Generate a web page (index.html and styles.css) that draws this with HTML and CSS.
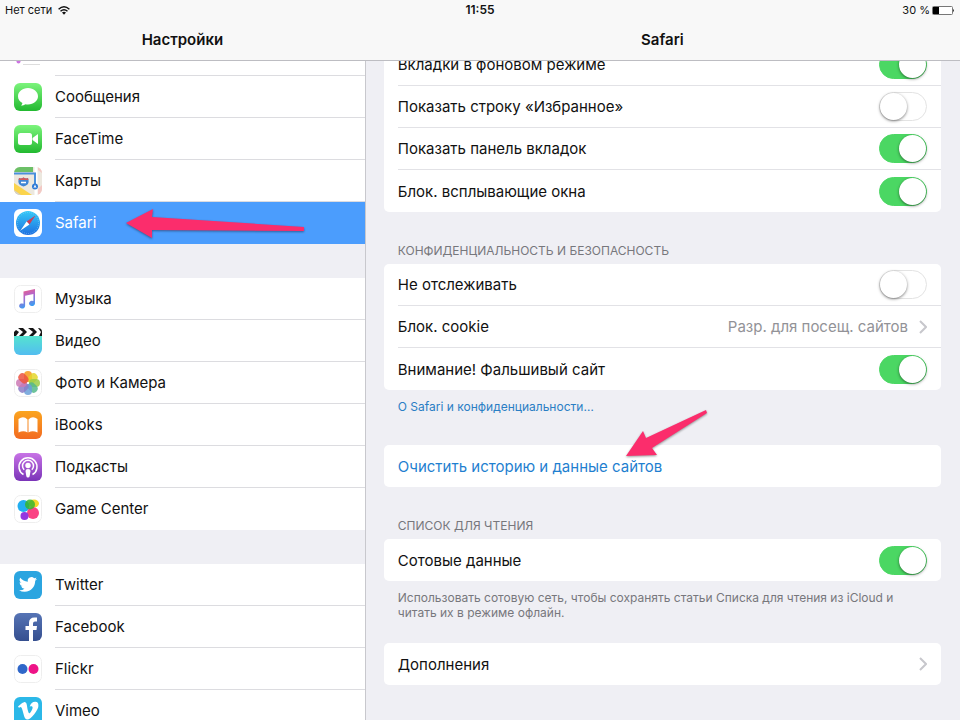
FILE: index.html
```html
<!DOCTYPE html>
<html lang="ru">
<head>
    <meta charset="UTF-8">
    <meta name="viewport" content="width=device-width, initial-scale=1.0">
    <title>Настройки</title>
    <link rel="stylesheet" href="styles.css">
</head>
<body>
    <header class="topbar">
        <div class="status">
            <span class="status-left">Нет сети
                <svg width="12" height="9" viewBox="0 0 12 9" fill="none" stroke="#111" stroke-width="1.5">
                    <path d="M0.6 3.2Q6 -1.6 11.4 3.2"/>
                    <path d="M2.5 5.2Q6 2.2 9.5 5.2"/>
                    <path d="M4 6.6Q6 5 8 6.6L6 8.8Z" fill="#111" stroke="none"/>
                </svg>
            </span>
            <span class="status-time">11:55</span>
            <span class="status-right">30 %
                <svg width="23" height="9" viewBox="0 0 23 9">
                    <rect x="0.5" y="0.5" width="20" height="8" rx="1" fill="#fff" stroke="#777"/>
                    <rect x="1" y="1" width="6" height="7" fill="#000"/>
                    <path d="M21 3Q23 4.5 21 6Z" fill="#333"/>
                </svg>
            </span>
        </div>
        <div class="titles">
            <h1 class="title">Настройки</h1>
            <h2 class="title">Safari</h2>
        </div>
    </header>

    <div class="panels">
        <nav class="sidebar">
            <div class="menu">
                <a class="menu-item" href="#" aria-label="Напоминания">
                    <svg class="icon" viewBox="0 0 28 28">
                        <rect width="28" height="28" rx="6" fill="#fff"/>
                        <g stroke="#ddd"><path d="M9 5.5H26M9 11.5H26M9 17.5H26M9 23.5H26"/></g>
                        <circle cx="4.5" cy="3" r="2" fill="#f90"/>
                        <circle cx="4.5" cy="9" r="2" fill="#1badf8"/>
                        <circle cx="4.5" cy="15" r="2" fill="#63da38"/>
                        <circle cx="4.5" cy="20.5" r="2" fill="#cc73e1"/>
                    </svg>
                    <span></span>
                </a>
                <a class="menu-item" href="#">
                    <svg class="icon" viewBox="0 0 28 28">
                        <defs>
                            <linearGradient id="green" x2="0" y2="1"><stop stop-color="#7cf47c"/><stop offset="1" stop-color="#22b930"/></linearGradient>
                        </defs>
                        <rect width="28" height="28" rx="6" fill="url(#green)"/>
                        <path d="M14 5C8.3 5 4 8.700 4 13.300c0 3 1.700 5.400 4.400 6.800-.2 1.200-.7 1.800-1.400 2.500 1.900 0 3.200-.5 4.500-1.400.8.2 1.600.3 2.500.3 5.700 0 10-3.600 10-8.200S19.700 5 14 5z" fill="#fff"/>
                    </svg>
                    <span>Сообщения</span>
                </a>
                <a class="menu-item" href="#">
                    <svg class="icon" viewBox="0 0 28 28">
                        <rect width="28" height="28" rx="6" fill="url(#green)"/>
                        <rect x="4" y="8" width="14" height="12" rx="2.5" fill="#fff"/>
                        <path d="M18.5 13L24 9v10l-5.500-4z" fill="#fff"/>
                    </svg>
                    <span>FaceTime</span>
                </a>
                <a class="menu-item" href="#">
                    <svg class="icon" viewBox="0 0 28 28">
                        <clipPath id="tile"><rect width="28" height="28" rx="6"/></clipPath>
                        <g clip-path="url(#tile)">
                            <rect width="28" height="28" fill="#ece8df"/>
                            <path d="M0 0H19V5H0z" fill="#6cc067"/>
                            <path d="M24 0h4v6l-4-3zM24 22l4-4v10h-4z" fill="#f3c9c4"/>
                            <path d="M0 16L18 28H5L0 25z" fill="#fbd44c"/>
                            <path d="M0 23l7 5H0z" fill="#d4d1cb"/>
                            <path d="M22 0V28" stroke="#fff" stroke-width="3"/>
                            <path d="M0 6.5H21V19" fill="none" stroke="#4a90dc" stroke-width="2"/>
                            <circle cx="21" cy="19.5" r="3" fill="#2f7bd6"/>
                            <path d="M21 17.5l1.500 3.500-1.500-.7-1.500.7z" fill="#fff"/>
                            <path d="M5 11q2 1 4.500-.5Q12 12 14 11q1.500 4-.5 6.500-2 1.500-4 2-2-.5-4-2Q3.500 15 5 11z" fill="#4186d5"/>
                            <path d="M5 11q2 1 4.500-.5Q12 12 14 11l.4 2H4.600z" fill="#d85a5a"/>
                            <path d="M7 15.500h5" stroke="#fff" stroke-width="1.500"/>
                        </g>
                    </svg>
                    <span>Карты</span>
                </a>
                <a class="menu-item selected" href="#" aria-current="page">
                    <svg class="icon" viewBox="0 0 28 28">
                        <defs>
                            <linearGradient id="compass" x2="0" y2="1"><stop stop-color="#35c9f8"/><stop offset="1" stop-color="#1e6fe0"/></linearGradient>
                        </defs>
                        <rect width="28" height="28" rx="6" fill="#fff"/>
                        <circle cx="14" cy="14" r="12" fill="url(#compass)"/>
                        <circle cx="14" cy="14" r="10.5" fill="none" stroke="#8fd3fb" stroke-width="1" stroke-dasharray="0.5 1.7"/>
                        <path d="M21.500 6.500L15.400 15.400 12.600 12.600z" fill="#c8405a"/>
                        <path d="M6.500 21.500L15.400 15.400 12.600 12.600z" fill="#fff"/>
                    </svg>
                    <span>Safari</span>
                    <svg class="arrow arrow-left" viewBox="0 0 182 34">
                        <path d="M2 17L29 3 28 11 180 21 180 25 28 24 28 32z" fill="#fb2d6c"/>
                    </svg>
                </a>
            </div>

            <div class="menu">
                <a class="menu-item" href="#">
                    <svg class="icon" viewBox="0 0 28 28">
                        <defs>
                            <linearGradient id="note" x1="0" y1="0" x2="0.3" y2="1"><stop stop-color="#fb5c74"/><stop offset="0.45" stop-color="#b765c8"/><stop offset="1" stop-color="#3b9df3"/></linearGradient>
                        </defs>
                        <rect x="0.5" y="0.5" width="27" height="27" rx="6" fill="#fff" stroke="#eee"/>
                        <path d="M9.500 6.500L21 4v14.500a3 2.600 0 1 1-1.600-2.400V9L11.100 10.800V21a3 2.600 0 1 1-1.600-2.300z" fill="url(#note)"/>
                    </svg>
                    <span>Музыка</span>
                </a>
                <a class="menu-item" href="#">
                    <svg class="icon" viewBox="0 0 28 28">
                        <defs>
                            <linearGradient id="video" x2="0" y2="1"><stop stop-color="#55e3d0"/><stop offset="1" stop-color="#52bdf0"/></linearGradient>
                        </defs>
                        <path d="M0 9H28V22a6 6 0 0 1-6 6H6a6 6 0 0 1-6-6z" fill="url(#video)"/>
                        <path d="M0 5q0-4 4-4h20q4 0 4 4v4H0z" fill="#fff"/>
                        <path d="M0 9V5l2-2 3 2-3 4zM4 1h5l4 4-4 4H5l4-4zM14 1h5l4 4-4 4h-4l4-4zM24 1q4 0 4 4v4h-3l2-4z" fill="#151515"/>
                    </svg>
                    <span>Видео</span>
                </a>
                <a class="menu-item" href="#">
                    <svg class="icon" viewBox="0 0 28 28">
                        <rect x="0.5" y="0.5" width="27" height="27" rx="6" fill="#fff" stroke="#eee"/>
                        <g class="petals">
                            <rect x="10" y="2" width="8" height="11" rx="4" fill="#f79a1d"/>
                            <rect x="10" y="2" width="8" height="11" rx="4" fill="#e4d62b" transform="rotate(45 14 14)"/>
                            <rect x="10" y="2" width="8" height="11" rx="4" fill="#9ccb45" transform="rotate(90 14 14)"/>
                            <rect x="10" y="2" width="8" height="11" rx="4" fill="#55b98b" transform="rotate(135 14 14)"/>
                            <rect x="10" y="2" width="8" height="11" rx="4" fill="#6a9fd8" transform="rotate(180 14 14)"/>
                            <rect x="10" y="2" width="8" height="11" rx="4" fill="#8b7cc6" transform="rotate(225 14 14)"/>
                            <rect x="10" y="2" width="8" height="11" rx="4" fill="#cc79b5" transform="rotate(270 14 14)"/>
                            <rect x="10" y="2" width="8" height="11" rx="4" fill="#ec5440" transform="rotate(315 14 14)"/>
                        </g>
                    </svg>
                    <span>Фото и Камера</span>
                </a>
                <a class="menu-item" href="#">
                    <svg class="icon" viewBox="0 0 28 28">
                        <defs>
                            <linearGradient id="books" x2="0" y2="1"><stop stop-color="#fba51f"/><stop offset="1" stop-color="#f26a21"/></linearGradient>
                        </defs>
                        <rect width="28" height="28" rx="6" fill="url(#books)"/>
                        <path d="M13.500 8.500Q9.500 4.500 4.500 8v13.500q5-2.500 9 0zM14.500 8.500q4-4 9-.5v13.500q-5-2.500-9 0z" fill="#fff"/>
                    </svg>
                    <span>iBooks</span>
                </a>
                <a class="menu-item" href="#">
                    <svg class="icon" viewBox="0 0 28 28">
                        <defs>
                            <linearGradient id="podcast" x2="0" y2="1"><stop stop-color="#c873e6"/><stop offset="1" stop-color="#7a34b8"/></linearGradient>
                        </defs>
                        <rect width="28" height="28" rx="6" fill="url(#podcast)"/>
                        <path d="M9.500 21.500a9 9 0 1 1 9 0M10.200 16.800a5.500 5.500 0 1 1 7.600 0" fill="none" stroke="#fff" stroke-width="1.5"/>
                        <circle cx="14" cy="12.5" r="2.7" fill="#fff"/>
                        <path d="M11.500 18q0-2 2.500-2t2.500 2l-.8 5q-.2 1.500-1.700 1.500T12.300 23z" fill="#fff"/>
                    </svg>
                    <span>Подкасты</span>
                </a>
                <a class="menu-item" href="#">
                    <svg class="icon" viewBox="0 0 28 28">
                        <rect x="0.5" y="0.5" width="27" height="27" rx="6" fill="#fff" stroke="#eee"/>
                        <ellipse cx="20" cy="8.5" rx="5" ry="4" fill="#f4d62a"/>
                        <circle cx="9.5" cy="11" r="6" fill="#22aef0"/>
                        <circle cx="19" cy="18" r="6" fill="#fa4384"/>
                        <ellipse cx="16" cy="9.5" rx="5" ry="5" fill="#37b52e" opacity="0.85"/>
                        <circle cx="10.5" cy="21" r="4" fill="#9437e0"/>
                    </svg>
                    <span>Game Center</span>
                </a>
            </div>

            <div class="menu">
                <a class="menu-item" href="#">
                    <svg class="icon" viewBox="0 0 28 28">
                        <rect width="28" height="28" rx="6" fill="#2ba5e0"/>
                        <path transform="translate(5 4.5) scale(0.75)" d="M23.950 4.570a10 10 0 0 1-2.820.77 4.960 4.960 0 0 0 2.160-2.720c-.95.550-2 .95-3.130 1.180a4.920 4.920 0 0 0-8.380 4.480C7.690 8.090 4.070 6.130 1.640 3.160a4.920 4.920 0 0 0 1.520 6.570 4.900 4.900 0 0 1-2.230-.61v.06a4.920 4.920 0 0 0 3.950 4.830 5 5 0 0 1-2.210.08 4.940 4.940 0 0 0 4.600 3.420A9.870 9.870 0 0 1 0 19.540a13.990 13.990 0 0 0 7.560 2.210c9.050 0 14-7.500 14-13.980l-.02-.64a9.940 9.940 0 0 0 2.410-2.560z" fill="#fff"/>
                    </svg>
                    <span>Twitter</span>
                </a>
                <a class="menu-item" href="#">
                    <svg class="icon" viewBox="0 0 28 28">
                        <defs>
                            <linearGradient id="fb" x2="0" y2="1"><stop stop-color="#5674b5"/><stop offset="1" stop-color="#354f8f"/></linearGradient>
                        </defs>
                        <rect width="28" height="28" rx="6" fill="url(#fb)"/>
                        <path d="M15 28V17h-3.500v-4H15v-3q0-5.500 5.500-5.500H23v4h-2q-2 0-2 2V13h4l-.5 4H19v11z" fill="#fff"/>
                    </svg>
                    <span>Facebook</span>
                </a>
                <a class="menu-item" href="#">
                    <svg class="icon" viewBox="0 0 28 28">
                        <rect x="0.5" y="0.5" width="27" height="27" rx="6" fill="#fff" stroke="#eee"/>
                        <circle cx="8.5" cy="14" r="5" fill="#2f67c9"/>
                        <circle cx="19.5" cy="14" r="5" fill="#ee1387"/>
                    </svg>
                    <span>Flickr</span>
                </a>
                <a class="menu-item" href="#">
                    <svg class="icon" viewBox="0 0 28 28">
                        <rect width="28" height="28" rx="6" fill="#2bb8e8"/>
                        <path transform="translate(4 3.5) scale(0.85)" d="M23.980 6.420c-.1 2.340-1.740 5.540-4.900 9.610-3.270 4.250-6.030 6.380-8.290 6.380-1.400 0-2.580-1.290-3.550-3.880L5.300 11.400C4.580 8.820 3.810 7.530 2.990 7.530c-.18 0-.81.380-1.880 1.130L0 7.200c1.190-1.040 2.360-2.080 3.500-3.130 1.580-1.360 2.770-2.080 3.560-2.150 1.870-.18 3.020 1.100 3.450 3.830.47 2.960.79 4.800.97 5.520.54 2.450 1.130 3.670 1.780 3.670.5 0 1.260-.8 2.280-2.390 1-1.590 1.550-2.800 1.620-3.630.15-1.380-.4-2.060-1.620-2.060-.58 0-1.170.13-1.780.39 1.180-3.880 3.440-5.760 6.770-5.640 2.470.06 3.630 1.660 3.450 4.810z" fill="#fff"/>
                    </svg>
                    <span>Vimeo</span>
                </a>
            </div>
        </nav>

        <main class="content">
            <section class="card">
                <label class="row">Вкладки в фоновом режиме <input class="switch" type="checkbox" checked></label>
                <label class="row">Показать строку «Избранное» <input class="switch" type="checkbox"></label>
                <label class="row">Показать панель вкладок <input class="switch" type="checkbox" checked></label>
                <label class="row">Блок. всплывающие окна <input class="switch" type="checkbox" checked></label>
            </section>

            <h3 class="caption">Конфиденциальность и безопасность</h3>
            <section class="card">
                <label class="row">Не отслеживать <input class="switch" type="checkbox"></label>
                <a class="row" href="#">Блок. cookie
                    <span class="value">Разр. для посещ. сайтов
                        <svg class="chevron" viewBox="0 0 8 14"><path d="M1 1L7 7 1 13"/></svg>
                    </span>
                </a>
                <label class="row">Внимание! Фальшивый сайт <input class="switch" type="checkbox" checked></label>
            </section>
            <p class="note"><a href="#">О Safari и конфиденциальности…</a></p>

            <section class="card clear">
                <button class="row clear-button" type="button">Очистить историю и данные сайтов</button>
                <svg class="arrow arrow-down" viewBox="0 0 84 48">
                    <path d="M2 46L19 21 22 28 82 0 83 3 28 38 33 45z" fill="#fb2d6c"/>
                </svg>
            </section>

            <h3 class="caption">Список для чтения</h3>
            <section class="card">
                <label class="row">Сотовые данные <input class="switch" type="checkbox" checked></label>
            </section>
            <p class="note">Использовать сотовую сеть, чтобы сохранять статьи Списка для чтения из iCloud и читать их в режиме офлайн.</p>

            <section class="card extras">
                <a class="row" href="#">Дополнения
                    <svg class="chevron" viewBox="0 0 8 14"><path d="M1 1L7 7 1 13"/></svg>
                </a>
            </section>
        </main>
    </div>
</body>
</html>
```
FILE: styles.css
```css
* {
    box-sizing: border-box;
}

body {
    margin: 0;
    height: 100vh;
    display: flex;
    flex-direction: column;
    overflow: hidden;
    background-color: #efeff4;
    color: #111;
    font-family: Inter, "Liberation Sans", sans-serif;
    font-size: 15px;
}

a {
    color: inherit;
    text-decoration: none;
}

/* status bar and titles */
.topbar {
    flex: none;
    height: 61px;
    background-color: #f8f8f8;
    border-bottom: 1px solid #bdbdc2;
}

.status {
    display: grid;
    grid-template-columns: 1fr auto 1fr;
    padding: 0 5px;
    line-height: 20px;
    font-size: 11px;
}

.status-left,
.status-right {
    display: flex;
    align-items: center;
    gap: 6px;
}

.status-right {
    justify-content: flex-end;
    gap: 2px;
}

.status-time {
    font-size: 12px;
    font-weight: 600;
}

.titles {
    display: grid;
    grid-template-columns: 38% 1fr;
}

.title {
    margin: 0;
    line-height: 40px;
    font-size: 15px;
    font-weight: 600;
    text-align: center;
}

.panels {
    flex: 1;
    min-height: 0;
    display: grid;
    grid-template-columns: 38% 1fr;
}

/* left column, scrolled so that the first row is partly hidden */
.sidebar {
    overflow: hidden;
}

.menu {
    margin-bottom: 34px;
    background-color: #fff;
}

.menu:first-child {
    margin-top: -27px;
}

.menu-item {
    position: relative;
    display: flex;
    align-items: center;
    gap: 13px;
    height: 42px;
    padding-left: 14px;
}

.menu-item span {
    flex: 1;
    height: 42px;
    line-height: 42px;
    border-bottom: 1px solid #dcdce0;
}

.menu-item:last-child span {
    border-bottom: none;
}

.icon {
    flex: none;
    width: 28px;
    height: 28px;
}

.selected {
    background-color: #4b9dfd;
    color: #fff;
}

.petals rect {
    opacity: 0.85;
}

/* right column */
.content {
    overflow: hidden;
    padding: 0 19px 0 18px;
    border-left: 1px solid #c8c8cd;
}

.card {
    position: relative;
    background-color: #fff;
    border-radius: 5px;
}

.card:first-child {
    margin-top: -17px;
}

.row {
    display: flex;
    align-items: center;
    justify-content: space-between;
    height: 42px;
    margin-left: 14px;
    padding-right: 14px;
    border-bottom: 1px solid #e2e2e6;
}

.row:last-child,
.clear-button {
    border-bottom: none;
}

.value {
    display: flex;
    align-items: center;
    gap: 11px;
    color: #929297;
}

.chevron {
    width: 8px;
    height: 14px;
    fill: none;
    stroke: #c7c7cc;
    stroke-width: 2;
}

.switch {
    appearance: none;
    flex: none;
    display: flex;
    width: 48px;
    height: 29px;
    margin: 0;
    border: 1px solid #e3e3e3;
    border-radius: 15px;
    background-color: #fff;
}

.switch::before {
    content: "";
    width: 27px;
    height: 27px;
    border-radius: 50%;
    background-color: #fff;
    box-shadow: 0 1px 3px rgba(0, 0, 0, 0.5);
}

.switch:checked {
    justify-content: flex-end;
    border-color: #4bd763;
    background-color: #4bd763;
}

.caption {
    margin: 0;
    padding: 30px 14px 5px;
    line-height: 17px;
    font-size: 12px;
    font-weight: 400;
    text-transform: uppercase;
    color: #77777c;
}

.note {
    margin: 0;
    padding: 9px 14px 0;
    line-height: 15px;
    font-size: 12px;
    color: #77777c;
}

.note a {
    color: #2a7ec4;
}

.clear {
    margin-top: 31px;
}

.clear-button {
    width: calc(100% - 14px);
    padding-left: 0;
    border: none;
    background: none;
    color: #1f7fd0;
    font: inherit;
    cursor: pointer;
}

.extras {
    margin-top: 23px;
}

/* pointers drawn over the rows */
.arrow {
    position: absolute;
    pointer-events: none;
    filter: drop-shadow(0 1px 1px rgba(0, 0, 0, 0.4));
}

.arrow-left {
    left: 124px;
    top: 4px;
    width: 182px;
    height: 34px;
}

.arrow-down {
    left: 240px;
    top: -35px;
    width: 84px;
    height: 48px;
}
```
